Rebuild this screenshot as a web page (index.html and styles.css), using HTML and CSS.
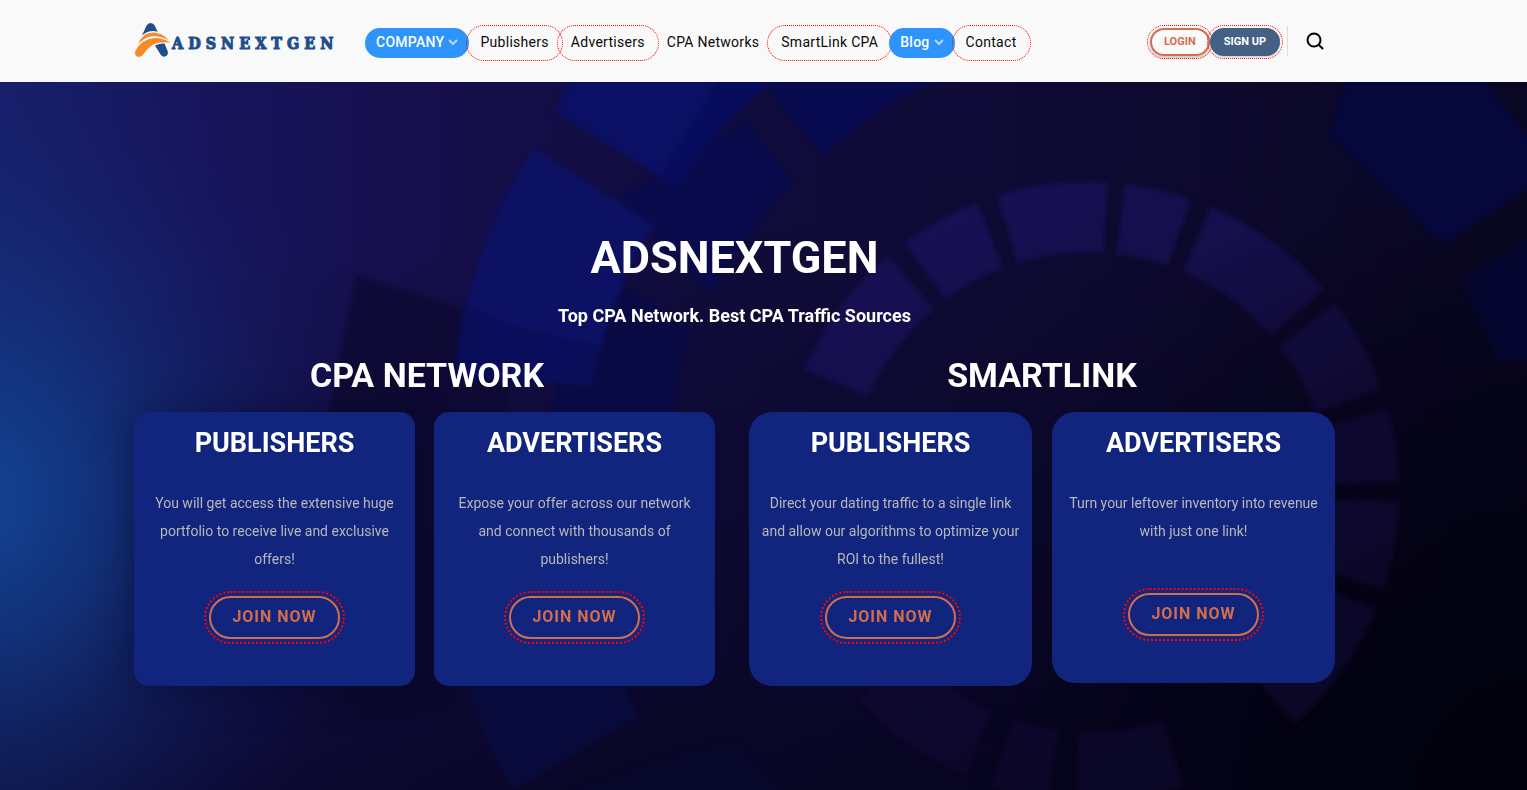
FILE: index.html
```
<!DOCTYPE html>
<html lang="en">
<head>
  <meta charset="UTF-8">
  <meta name="viewport" content="width=device-width, initial-scale=1.0">
  <title>AdsNextGen - Top CPA Network</title>
  <link rel="stylesheet" href="styles.css">
</head>
<body>
  <header class="header">
    <div class="container header-inner">
      <a class="logo" href="#">
        <svg class="logo-mark" viewBox="0 0 38 36" width="38" height="36" aria-hidden="true">
          <path d="M8 13.500L12.600 3.500Q13.800 1 16.600 1Q19.500 1 20.700 3.500L23.600 9.800Q15.500 7.400 8 13.500Z" fill="#1f4e8f"/>
          <path d="M21 23.500Q26 21.300 30.500 21.600L33.800 29.500Q34.500 33.300 31.200 34.600Q27.800 35.200 26.300 32Z" fill="#1f4e8f"/>
          <path d="M4 22.500Q8 10.500 19.500 10.600Q28.500 11 34.500 18.200Q25 12.800 16.500 14.600Q9.500 16.200 4 22.500Z" fill="#f68b28"/>
          <path d="M1.300 29Q3.500 24 8.500 20.200Q16.500 15 25.500 16.200Q32 17.300 36.500 20.600Q27 19.200 20.500 22Q14.500 24.900 9.800 31.800Q7.500 35.300 4 34.900Q0 33.500 1.300 29Z" fill="#f68b28"/>
        </svg>
        <span class="logo-text">ADSNEXTGEN</span>
      </a>

      <nav class="nav">
        <a class="nav-link active" href="#">COMPANY
          <svg class="chevron" viewBox="0 0 10 6" width="10" height="6" aria-hidden="true"><path d="M1 1L5 5L9 1"/></svg>
        </a>
        <a class="nav-link dotted" href="#">Publishers</a>
        <a class="nav-link dotted" href="#">Advertisers</a>
        <a class="nav-link" href="#">CPA Networks</a>
        <a class="nav-link dotted" href="#">SmartLink CPA</a>
        <a class="nav-link active" href="#">Blog
          <svg class="chevron" viewBox="0 0 10 6" width="10" height="6" aria-hidden="true"><path d="M1 1L5 5L9 1"/></svg>
        </a>
        <a class="nav-link dotted" href="#">Contact</a>
      </nav>

      <div class="account">
        <a class="account-btn login" href="#">LOGIN</a>
        <a class="account-btn signup" href="#">SIGN UP</a>
        <span class="divider"></span>
        <button class="search" type="button" aria-label="Search">
          <svg viewBox="0 0 18 18" width="18" height="18" aria-hidden="true">
            <circle cx="8" cy="8" r="6.500"/>
            <path d="M12.500 12.500L17 17"/>
          </svg>
        </button>
      </div>
    </div>
  </header>

  <main class="hero">
    <!-- Background artwork -->
    <svg class="hero-bg" viewBox="0 82 1527 708" preserveAspectRatio="xMidYMid slice" aria-hidden="true">
      <defs>
        <linearGradient id="base" x1="0" y1="0" x2="1" y2="0">
          <stop offset="0" stop-color="#18206c"/>
          <stop offset="0.140" stop-color="#17145b"/>
          <stop offset="0.280" stop-color="#160f4c"/>
          <stop offset="0.450" stop-color="#110d3e"/>
          <stop offset="0.700" stop-color="#0f0a33"/>
          <stop offset="1" stop-color="#0a0722"/>
        </linearGradient>
        <linearGradient id="shade" x1="0.300" y1="0" x2="0.550" y2="1">
          <stop offset="0.200" stop-color="#05031a" stop-opacity="0"/>
          <stop offset="1" stop-color="#05031a" stop-opacity="0.700"/>
        </linearGradient>
        <radialGradient id="glow" gradientUnits="userSpaceOnUse" cx="0" cy="0" r="1" gradientTransform="translate(-20 500) scale(400 460)">
          <stop offset="0" stop-color="#124494"/>
          <stop offset="0.300" stop-color="#123b88" stop-opacity="0.750"/>
          <stop offset="0.650" stop-color="#122c74" stop-opacity="0.350"/>
          <stop offset="1" stop-color="#12185c" stop-opacity="0"/>
        </radialGradient>
        <radialGradient id="corner" gradientUnits="userSpaceOnUse" cx="1527" cy="800" r="620">
          <stop offset="0" stop-color="#01010c"/>
          <stop offset="1" stop-color="#01010c" stop-opacity="0"/>
        </radialGradient>
        <linearGradient id="ring" x1="0.100" y1="0" x2="0.600" y2="1">
          <stop offset="0" stop-color="#181056"/>
          <stop offset="0.300" stop-color="#150f4a"/>
          <stop offset="0.600" stop-color="#0f0932"/>
          <stop offset="1" stop-color="#0b0726"/>
        </linearGradient>
        <filter id="soft" color-interpolation-filters="sRGB"><feGaussianBlur stdDeviation="2"/></filter>
      </defs>
      <rect x="0" y="82" width="1527" height="708" fill="url(#base)"/>
      <rect x="0" y="82" width="1527" height="708" fill="url(#shade)"/>
      <rect x="0" y="82" width="1527" height="708" fill="url(#glow)"/>
      <rect x="0" y="82" width="1527" height="708" fill="url(#corner)"/>
      <g filter="url(#soft)">
        <path d="M356 275L512 325L502 560L480 700L358 725Q310 560 329 412Z" fill="#0b092d" opacity="0.700"/>
        <path d="M619 198L746 121L794 182Q740 240 711 293Z" fill="#090b4c"/>
        <path d="M622 285L692 329Q675 370 672 440L546 440L560 370Z" fill="#090a44"/>
        <path d="M534 148L653 225Q610 300 590 385L455 375Q470 240 534 148Z" fill="#0c1163"/>
        <path d="M512 325L600 345L590 385L452 380L462 302Z" fill="#0a0d55" opacity="0.600"/>
        <path d="M555 112L573 76H780Q710 130 678 188Z" fill="#0b1064"/>
        <path d="M660 175L720 76H780Q710 130 678 188Z" fill="#070c5c"/>
        <path d="M770 92L776 76H950Q880 100 824 156Z" fill="#080b50"/>
        <path d="M1328 134L1348 76H1480L1535 145V184L1443 245Z" fill="#06073a"/>
        <path d="M1462 279L1535 235V361H1499Z" fill="#050630"/>
        <path d="M468 680H620L638 716L514 790Q480 740 468 680Z" fill="#090a3c"/>
        <path d="M540 800L655 757L738 736L790 800Z" fill="#07072a"/>
        <circle cx="1089" cy="492" r="275" pathLength="360" fill="none" stroke="url(#ring)" stroke-width="70"
          stroke-dasharray="0 1.700 16.700 3.900 26.100 23.700 20.100 5.300 10.800 5.400 24.100 65.600 26.200 3.900 15.400 3.800 20.700 3.300 12.500 3.900 26.100 3.400 18 3.900 13.500 2"/>
      </g>
    </svg>

    <div class="container hero-content">
      <h1>ADSNEXTGEN</h1>
      <p class="tagline">Top CPA Network. Best CPA Traffic Sources</p>

      <div class="groups">
        <section class="group network">
          <h2>CPA NETWORK</h2>
          <div class="cards">
            <article class="card">
              <h3>PUBLISHERS</h3>
              <p>You will get access the extensive huge portfolio to receive live and exclusive offers!</p>
              <a class="join" href="#">JOIN NOW</a>
            </article>
            <article class="card">
              <h3>ADVERTISERS</h3>
              <p>Expose your offer across our network and connect with thousands of publishers!</p>
              <a class="join" href="#">JOIN NOW</a>
            </article>
          </div>
        </section>

        <section class="group smartlink">
          <h2>SMARTLINK</h2>
          <div class="cards">
            <article class="card">
              <h3>PUBLISHERS</h3>
              <p>Direct your dating traffic to a single link and allow our algorithms to optimize your ROI to the fullest!</p>
              <a class="join" href="#">JOIN NOW</a>
            </article>
            <article class="card short">
              <h3>ADVERTISERS</h3>
              <p>Turn your leftover inventory into revenue with just one link!</p>
              <a class="join" href="#">JOIN NOW</a>
            </article>
          </div>
        </section>
      </div>
    </div>
  </main>
</body>
</html>
```
FILE: styles.css
```
* {
  box-sizing: border-box;
}
body {
  margin: 0;
  min-height: 100vh;
  display: flex;
  flex-direction: column;
  font-family: Roboto, sans-serif;
  background-color: #0a0722;
}
a {
  text-decoration: none;
}
h1, h2, h3, p {
  margin: 0;
}
.container {
  width: 100%;
  max-width: 1201px;
  margin: 0 auto;
}

/* Header */
.header {
  padding-right: 58px;
  background-color: #f9f9f9;
}
.header-inner {
  display: flex;
  align-items: center;
  height: 82px;
}
.logo {
  display: flex;
  align-items: center;
  width: 231px;
}
.logo-mark {
  flex: none;
  margin-bottom: 2px;
}
.logo-text {
  padding-top: 4px;
  color: #1f4e8f;
  font-family: "DejaVu Serif Condensed", "DejaVu Serif", serif;
  font-size: 16px;
  font-weight: bold;
  letter-spacing: 5px;
  -webkit-text-stroke: 1px #1f4e8f;
}
.nav {
  display: flex;
  align-items: center;
  padding-top: 4px;
}
.nav-link {
  display: flex;
  align-items: center;
  gap: 4px;
  padding: 0 11px 2px;
  border-radius: 99px;
  color: #0a0a0a;
  font-size: 14px;
  line-height: 28px;
  letter-spacing: 0.02em;
  white-space: nowrap;
}
.nav-link.active {
  color: #fff;
  background-color: #2e93fa;
  font-weight: 500;
}
.nav-link.dotted {
  outline: 1px dotted #f00;
  outline-offset: 2px;
}
.chevron {
  fill: none;
  stroke: #b9dafd;
  stroke-width: 2;
}
.account {
  display: flex;
  align-items: center;
  margin-left: auto;
  margin-right: 11px;
}
.account-btn {
  height: 28px;
  margin-top: 2px;
  padding: 0 12px;
  border: 2px solid #d26e4b;
  border-radius: 99px;
  outline: 1px dotted #f00;
  outline-offset: 2px;
  font-size: 11px;
  font-weight: bold;
  line-height: 23px;
}
.login {
  color: #d26e4b;
  box-shadow: 0 2px 3px rgba(0, 0, 0, 0.2);
}
.signup {
  border-color: #446084;
  color: #fff;
  background-color: #446084;
  box-shadow: 0 1px 2px rgba(0, 0, 0, 0.2);
}
.divider {
  height: 30px;
  margin: 0 18px 0 7px;
  border-left: 1px solid #ddd;
}
.search {
  display: flex;
  padding: 0;
  border: 0;
  background: none;
}
.search svg {
  fill: none;
  stroke: #000;
  stroke-width: 2;
}

/* Hero */
.hero {
  position: relative;
  flex: 1;
  padding: 146px 58px 60px 0;
  overflow: hidden;
}
.hero-bg {
  position: absolute;
  top: 0;
  left: 0;
  width: 100%;
  height: 100%;
}
.hero-content {
  position: relative;
  color: #fff;
  text-align: center;
}
h1 {
  font-size: 45px;
  line-height: 60px;
}
.tagline {
  margin-top: 14px;
  font-size: 18px;
  font-weight: bold;
  line-height: 28px;
}
.groups {
  display: grid;
  grid-template-columns: 1fr 1fr;
  gap: 29px;
  margin-top: 23px;
}
h2 {
  margin-bottom: 15px;
  font-size: 34px;
  line-height: 44px;
}
.cards {
  display: grid;
  grid-template-columns: 1fr 1fr;
  gap: 20px;
  align-items: start;
}
.card {
  padding: 14px 10px 47px;
  border-radius: 23px;
  background-color: #11247e;
}
.network .cards {
  gap: 19px;
  margin-right: 5px;
}
.network .card {
  padding-left: 15px;
  padding-right: 15px;
  border-radius: 15px;
}
.network .card:first-child {
  box-shadow: 0 4px 40px rgba(4, 3, 24, 0.4);
}
h3 {
  font-size: 27px;
  line-height: 35px;
}
.card p {
  margin: 28px 0 23px;
  color: #b8b8b8;
  font-size: 14px;
  line-height: 28px;
}
.card.short p {
  margin-bottom: 48px;
}
.join {
  display: inline-block;
  padding: 0 21px 2px;
  border: 2px solid #d26e4b;
  border-radius: 99px;
  outline: 2px dotted #f00;
  outline-offset: 3px;
  color: #d26e4b;
  font-size: 16px;
  font-weight: bold;
  line-height: 37px;
  letter-spacing: 1px;
  vertical-align: top;
}
```
